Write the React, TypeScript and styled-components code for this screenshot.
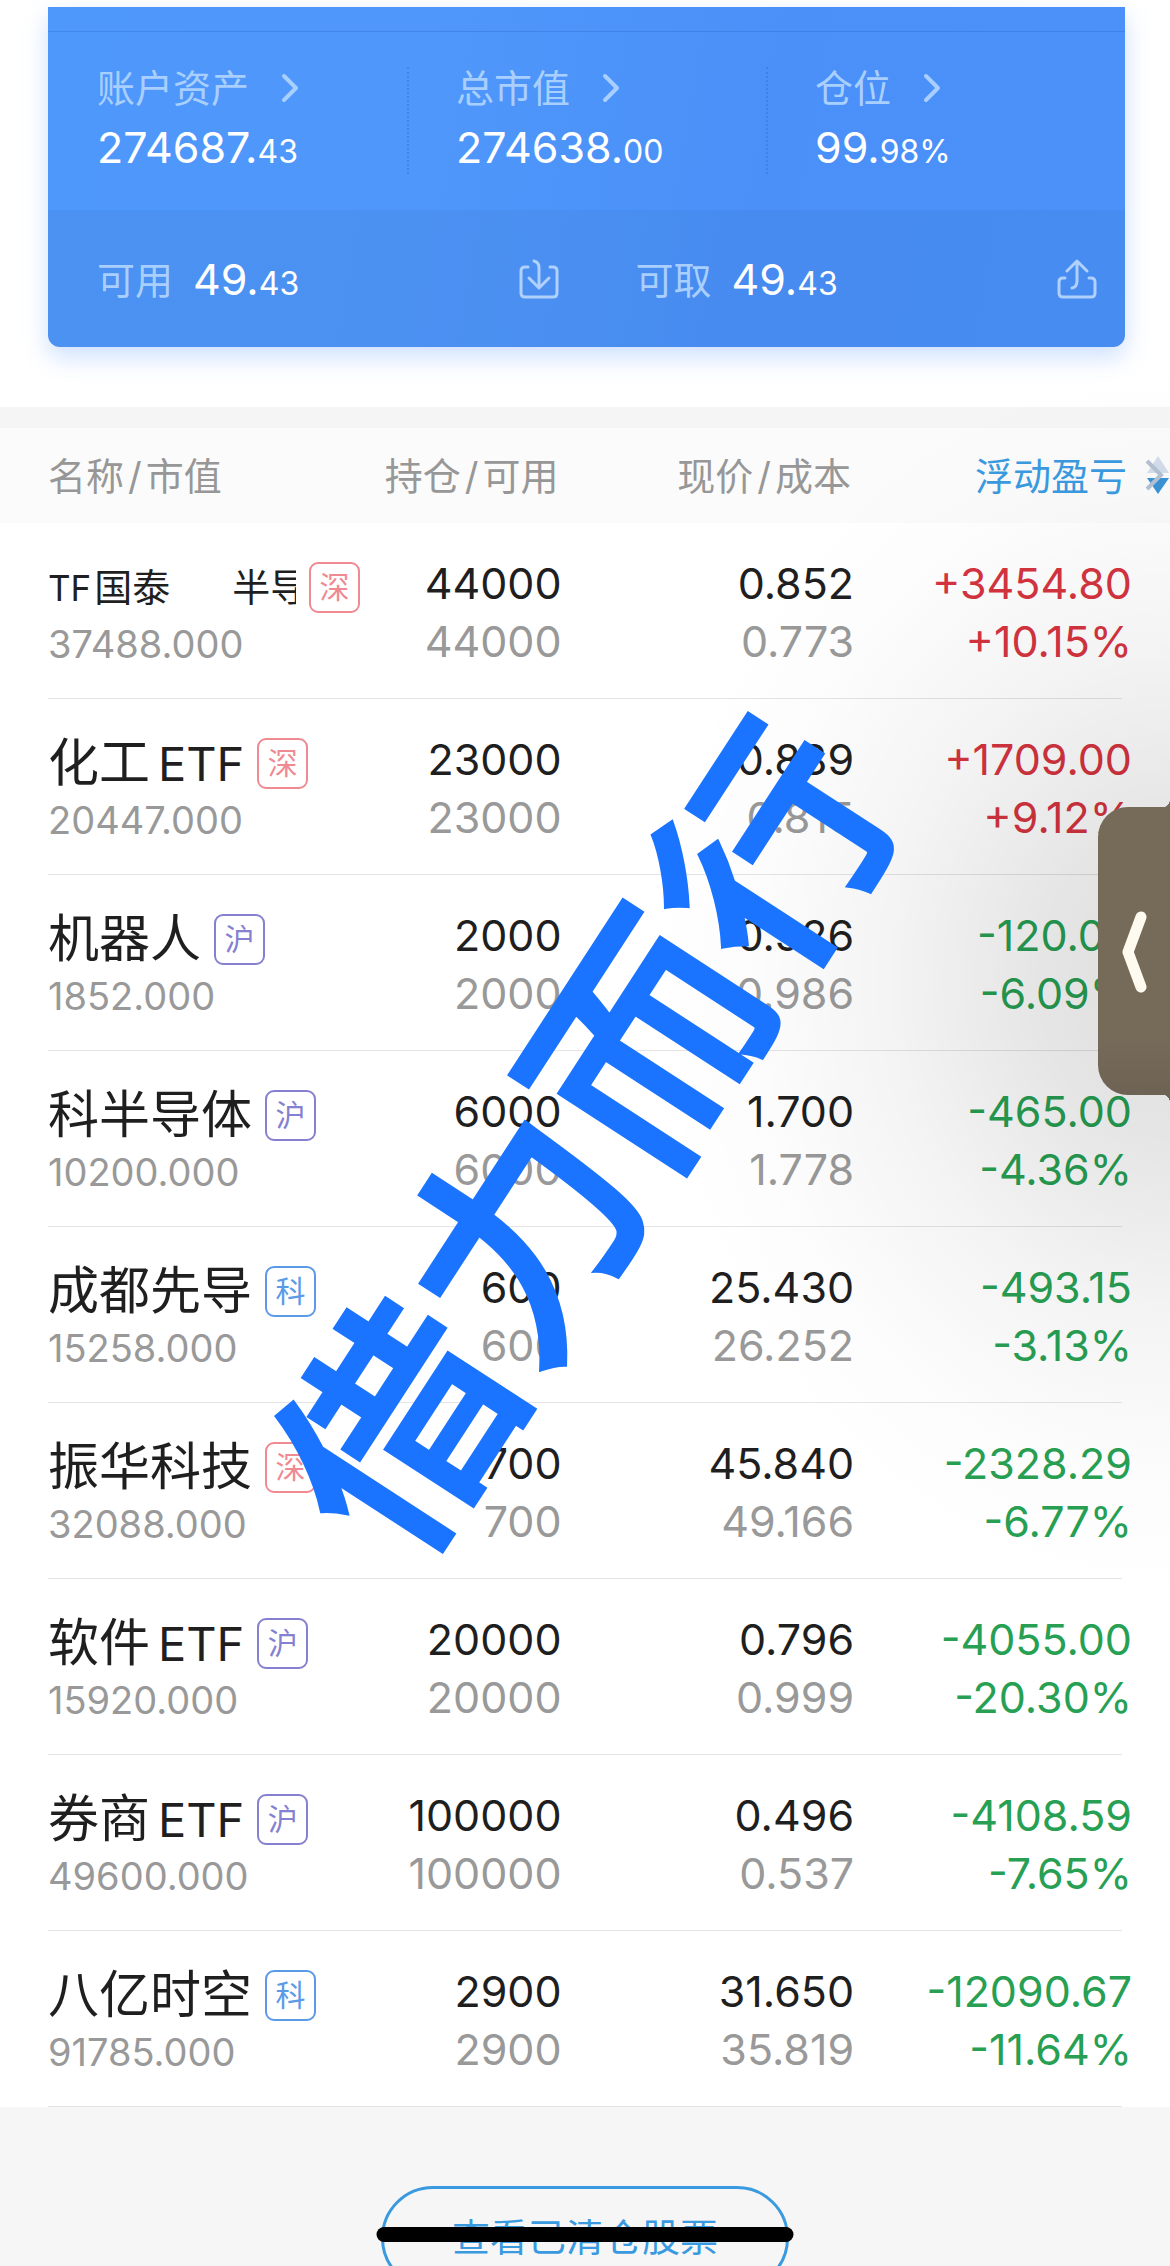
import React from 'react';
import styled, { createGlobalStyle } from 'styled-components';

const GlobalStyle = createGlobalStyle`
  *, *::before, *::after { box-sizing: border-box; }
  body {
    margin: 0;
    background: #f6f6f6;
    color: #1f1f1f;
    font-family: Inter, "Noto Sans CJK SC", sans-serif;
  }
  button { font: inherit; color: inherit; background: none; border: 0; padding: 0; cursor: pointer; }
`;

const Screen = styled.main`
  position: relative;
  height: 100vh;
  overflow: hidden;
`;

const Summary = styled.section`
  padding: 7px 45px 60px 48px;
  background: #fff;
  border-bottom: 21px solid #f5f5f5;
`;

const Card = styled.div`
  border-radius: 0 0 12px 12px;
  background: linear-gradient(100deg, #4f98fb 0%, #4f97fb 35%, #4a90f8 65%, #4a91f9 100%);
  box-shadow: 0 10px 24px rgba(74, 144, 248, 0.28);
  color: #fff;
  overflow: hidden;
`;

const CardEdge = styled.div`
  height: 25px;
  border-bottom: 1px solid rgba(40, 100, 200, 0.35);
`;

const Metrics = styled.div`
  display: grid;
  grid-template-columns: repeat(3, 1fr);
  padding: 35px 0 36px;
`;

const Metric = styled.div`
  height: 107px;
  padding-left: 47px;
  border-left: 2px dotted rgba(40, 100, 210, 0.35);
  &:first-child { border-left-color: transparent; }
`;

const MetricLabel = styled.button`
  display: flex;
  align-items: center;
  gap: 32px;
  height: 42px;
  font-size: 38px;
  line-height: 42px;
  color: #a9cffe;
`;

const Amount = styled.span`
  display: block;
  font-size: 43px;
  line-height: 76px;
  white-space: nowrap;
`;

const Cents = styled.small`
  font-size: 32px;
`;

const Funds = styled.div`
  display: grid;
  grid-template-columns: repeat(2, 1fr);
  height: 137px;
  background: rgba(60, 110, 190, 0.14);
`;

const Fund = styled.div`
  display: flex;
  align-items: center;
  gap: 20px;
  padding: 0 28px 0 49px;
  ${Amount} { padding-top: 6px; }
`;

const FundLabel = styled.span`
  padding-bottom: 3px;
  font-size: 38px;
  color: #a9cffe;
`;

const IconButton = styled.button`
  display: flex;
  margin-left: auto;
  color: #b0d0fd;
`;

const Table = styled.table`
  width: 100%;
  table-layout: fixed;
  border-collapse: collapse;
  background: #fff;
`;

const HeadCell = styled.th<{ $left?: boolean; $active?: boolean; $last?: boolean }>`
  position: relative;
  height: 95px;
  padding: ${p => (p.$left ? '0 0 4px 48px' : p.$last ? '0 43px 4px 0' : '0 3px 4px 0')};
  background: #fbfbfb;
  font-size: 38px;
  font-weight: 400;
  text-align: ${p => (p.$left ? 'left' : 'right')};
  color: ${p => (p.$active ? '#3a9ae0' : '#979797')};
  white-space: nowrap;
`;

const Slash = styled.span`
  margin: 0 4px;
`;

const SortIcon = styled.svg`
  position: absolute;
  right: 0;
  top: 26px;
`;

const Row = styled.tr`
  height: 176px;
  background: linear-gradient(#e4e4e4, #e4e4e4) 48px 100% / calc(100% - 96px) 1px no-repeat;
`;

const NameCell = styled.th`
  padding: 35px 0 0 48px;
  text-align: left;
  vertical-align: top;
  font-weight: 400;
`;

const NameLine = styled.div`
  display: flex;
  align-items: center;
  gap: 13px;
  height: 58px;
`;

const Name = styled.span<{ $scrolling?: boolean }>`
  width: ${p => (p.$scrolling ? '248px' : 'auto')};
  font-size: ${p => (p.$scrolling ? '38px' : '51px')};
  line-height: 58px;
  white-space: pre;
  overflow: ${p => (p.$scrolling ? 'hidden' : 'visible')};
`;

const Latin = styled.span<{ $lead?: boolean }>`
  font-size: ${p => (p.$lead ? '35px' : '47px')};
  margin: ${p => (p.$lead ? '0 3px 0 0' : '0 0 0 8px')};
`;

const Tail = styled.span`
  margin-left: 62px;
`;

const Badge = styled.span<{ $tone: string }>`
  flex: none;
  width: 51px;
  height: 51px;
  border: 2px solid ${p => p.$tone};
  border-radius: 9px;
  color: ${p => p.$tone};
  background: #fff;
  font-size: 30px;
  line-height: 46px;
  text-align: center;
`;

const MarketValue = styled.div`
  font-size: 38px;
  line-height: 56px;
  color: #999;
`;

const NumCell = styled.td<{ $last?: boolean; $tone?: string }>`
  padding: 31px ${p => (p.$last ? '38px' : '0')} 0 0;
  vertical-align: top;
  text-align: right;
  font-size: 43px;
  line-height: 58px;
  white-space: nowrap;
  color: ${p => p.$tone || '#1f1f1f'};
`;

const Sub = styled.div<{ $muted?: boolean }>`
  color: ${p => (p.$muted ? '#999' : 'inherit')};
`;

const Footer = styled.footer`
  display: flex;
  justify-content: center;
  padding: 79px 0;
`;

const ClearedButton = styled.button`
  width: 408px;
  height: 104px;
  padding-bottom: 8px;
  border: 3px solid #3a9ae0;
  border-radius: 52px;
  font-size: 38px;
  color: #3a9ae0;
`;

const HomeBar = styled.div`
  position: absolute;
  left: 50%;
  bottom: 24px;
  width: 417px;
  height: 15px;
  border-radius: 8px;
  background: #000;
  transform: translateX(-50%);
`;

const Shade = styled.div`
  position: absolute;
  right: 0;
  top: 360px;
  width: 520px;
  height: 1240px;
  pointer-events: none;
  background: radial-gradient(
    ellipse 520px 620px at 100% 50%,
    rgba(0, 0, 0, 0.13) 0%,
    rgba(0, 0, 0, 0.1) 25%,
    rgba(0, 0, 0, 0.045) 55%,
    rgba(0, 0, 0, 0.012) 80%,
    rgba(0, 0, 0, 0) 100%
  );
`;

const Watermark = styled.div`
  position: absolute;
  left: 574px;
  top: 1130px;
  font-family: "Noto Sans CJK SC", sans-serif;
  font-size: 230px;
  font-weight: 500;
  line-height: 1;
  white-space: nowrap;
  color: #1a74ff;
  -webkit-text-stroke: 4px #1a74ff;
  pointer-events: none;
  transform: translate(-50%, -50%) rotate(-57deg);
`;

const Handle = styled.button`
  && {
    position: absolute;
    right: 0;
    top: 807px;
    display: flex;
    align-items: center;
    justify-content: center;
    width: 72px;
    height: 288px;
    border-radius: 30px 0 0 30px;
    background: linear-gradient(#766b59 80%, #6e6254);
    color: #fffaf0;
  }
  &::before, &::after {
    content: "";
    position: absolute;
    right: 0;
    width: 6px;
    height: 8px;
  }
  &::before {
    top: -8px;
    background: radial-gradient(ellipse 6px 8px at 0 0, transparent 96%, #766b59);
  }
  &::after {
    bottom: -8px;
    background: radial-gradient(ellipse 6px 8px at 0 100%, transparent 96%, #6e6254);
  }
`;

const RED = '#d5343f';
const GREEN = '#27a053';
const TONES: Record<string, string> = { 深: '#ef8a93', 沪: '#8580d0', 科: '#5a9ae6' };

type Holding = {
  name: string; latin?: string; scrolling?: boolean; market: string; value: string;
  held: string; usable: string; price: string; cost: string; gain: string; rate: string;
};

const holdings: Holding[] = [
  { name: '国泰', latin: 'TF', scrolling: true, market: '深', value: '37488.000', held: '44000', usable: '44000', price: '0.852', cost: '0.773', gain: '+3454.80', rate: '+10.15%' },
  { name: '化工', latin: 'ETF', market: '深', value: '20447.000', held: '23000', usable: '23000', price: '0.889', cost: '0.815', gain: '+1709.00', rate: '+9.12%' },
  { name: '机器人', market: '沪', value: '1852.000', held: '2000', usable: '2000', price: '0.926', cost: '0.986', gain: '-120.00', rate: '-6.09%' },
  { name: '科半导体', market: '沪', value: '10200.000', held: '6000', usable: '6000', price: '1.700', cost: '1.778', gain: '-465.00', rate: '-4.36%' },
  { name: '成都先导', market: '科', value: '15258.000', held: '600', usable: '600', price: '25.430', cost: '26.252', gain: '-493.15', rate: '-3.13%' },
  { name: '振华科技', market: '深', value: '32088.000', held: '700', usable: '700', price: '45.840', cost: '49.166', gain: '-2328.29', rate: '-6.77%' },
  { name: '软件', latin: 'ETF', market: '沪', value: '15920.000', held: '20000', usable: '20000', price: '0.796', cost: '0.999', gain: '-4055.00', rate: '-20.30%' },
  { name: '券商', latin: 'ETF', market: '沪', value: '49600.000', held: '100000', usable: '100000', price: '0.496', cost: '0.537', gain: '-4108.59', rate: '-7.65%' },
  { name: '八亿时空', market: '科', value: '91785.000', held: '2900', usable: '2900', price: '31.650', cost: '35.819', gain: '-12090.67', rate: '-11.64%' },
];

const metrics = [
  { label: '账户资产', whole: '274687.', rest: '43' },
  { label: '总市值', whole: '274638.', rest: '00' },
  { label: '仓位', whole: '99.', rest: '98%' },
];

const Chevron = () => (
  <svg width="18" height="30" viewBox="0 0 18 30" fill="none" stroke="currentColor" strokeWidth="4" strokeLinecap="round" strokeLinejoin="round">
    <path d="M3 3l12 12L3 27" />
  </svg>
);

const DownloadIcon = () => (
  <svg width="40" height="40" viewBox="0 0 40 40" fill="none" stroke="currentColor" strokeWidth="3" strokeLinecap="round" strokeLinejoin="round">
    <path d="M9 8H6Q2 8 2 12V34Q2 38 6 38H34Q38 38 38 34V12Q38 8 34 8H31" />
    <path d="M15 2Q20 3 20 9V28M10 19L20 29L30 19" />
  </svg>
);

const UploadIcon = () => (
  <svg width="40" height="40" viewBox="0 0 40 40" fill="none" stroke="currentColor" strokeWidth="3" strokeLinecap="round" strokeLinejoin="round">
    <path d="M8 19H6Q2 19 2 23V34Q2 38 6 38H34Q38 38 38 34V23Q38 19 34 19H32" />
    <path d="M15 29Q20 28 20 22V3M10 12L20 2L30 12" />
  </svg>
);

export default function App() {
  return (
    <>
      <GlobalStyle />
      <Screen>
        <Summary>
          <Card>
            <CardEdge />
            <Metrics>
              {metrics.map(m => (
                <Metric key={m.label}>
                  <MetricLabel type="button">{m.label}<Chevron /></MetricLabel>
                  <Amount>{m.whole}<Cents>{m.rest}</Cents></Amount>
                </Metric>
              ))}
            </Metrics>
            <Funds>
              <Fund>
                <FundLabel>可用</FundLabel>
                <Amount>49.<Cents>43</Cents></Amount>
                <IconButton type="button" aria-label="转入"><DownloadIcon /></IconButton>
              </Fund>
              <Fund>
                <FundLabel>可取</FundLabel>
                <Amount>49.<Cents>43</Cents></Amount>
                <IconButton type="button" aria-label="转出"><UploadIcon /></IconButton>
              </Fund>
            </Funds>
          </Card>
        </Summary>

        <Table>
          <colgroup>
            <col style={{ width: '31%' }} />
            <col style={{ width: '17%' }} />
            <col style={{ width: '25%' }} />
            <col style={{ width: '27%' }} />
          </colgroup>
          <thead>
            <tr>
              <HeadCell $left>名称<Slash>/</Slash>市值</HeadCell>
              <HeadCell>持仓<Slash>/</Slash>可用</HeadCell>
              <HeadCell>现价<Slash>/</Slash>成本</HeadCell>
              <HeadCell $last $active>
                浮动盈亏
                <SortIcon width="26" height="44" viewBox="0 0 26 44">
                  <path d="M14 2L25 19H3Z" fill="#d3dde9" />
                  <path d="M3 24H25L14 40Z" fill="#3a93d6" />
                  <path d="M3 7L17 21L3 35" fill="none" stroke="#b3c1d2" strokeWidth="4" />
                </SortIcon>
              </HeadCell>
            </tr>
          </thead>
          <tbody>
            {holdings.map(h => (
              <Row key={h.value}>
                <NameCell scope="row">
                  <NameLine>
                    {h.scrolling
                      ? <Name $scrolling><Latin $lead>{h.latin}</Latin>{h.name}<Tail>半导</Tail></Name>
                      : <Name>{h.name}{h.latin && <Latin>{h.latin}</Latin>}</Name>}
                    <Badge $tone={TONES[h.market]}>{h.market}</Badge>
                  </NameLine>
                  <MarketValue>{h.value}</MarketValue>
                </NameCell>
                <NumCell>{h.held}<Sub $muted>{h.usable}</Sub></NumCell>
                <NumCell>{h.price}<Sub $muted>{h.cost}</Sub></NumCell>
                <NumCell $last $tone={h.gain.startsWith('+') ? RED : GREEN}>{h.gain}<Sub>{h.rate}</Sub></NumCell>
              </Row>
            ))}
          </tbody>
        </Table>

        <Footer>
          <ClearedButton type="button">查看已清仓股票</ClearedButton>
        </Footer>

        <Shade />
        <Watermark>借力而行</Watermark>
        <Handle type="button" aria-label="展开">
          <svg width="28" height="96" viewBox="0 0 28 96" fill="none" stroke="currentColor" strokeWidth="11" strokeLinecap="round" strokeLinejoin="round">
            <path d="M21 14L8 49L21 84" />
          </svg>
        </Handle>
        <HomeBar />
      </Screen>
    </>
  );
}
